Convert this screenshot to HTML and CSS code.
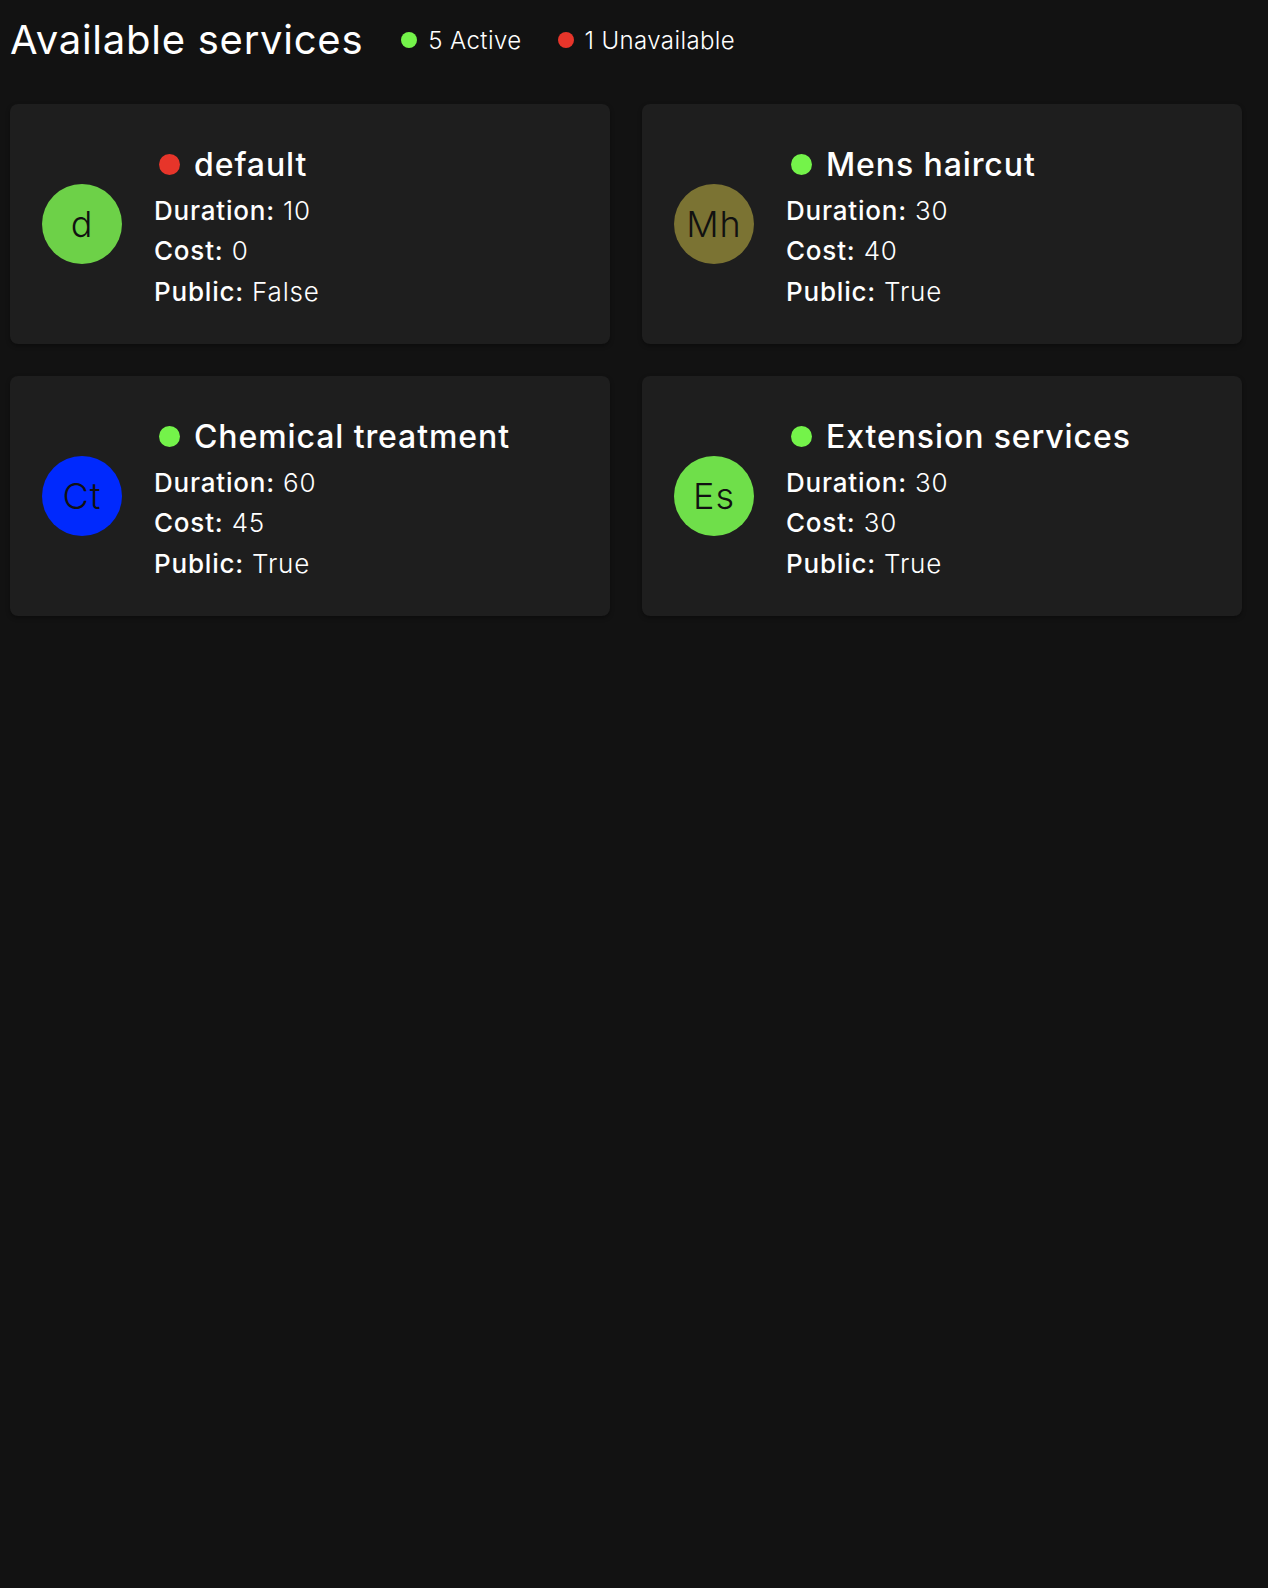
FILE: index.html
```html
<!DOCTYPE html>
<html lang="en">
<head>
<meta charset="utf-8">
<title>Available services</title>
<link rel="stylesheet" href="styles.css">
</head>
<body>
<div class="page">
  <header class="header">
    <h1 class="title">Available services</h1>
    <div class="legend">
      <span class="legend-item"><span class="dot dot-sm dot-green"></span>5 Active</span>
      <span class="legend-item"><span class="dot dot-sm dot-red"></span>1 Unavailable</span>
    </div>
  </header>
  <main class="grid">
    <article class="card">
      <div class="avatar av-green">d</div>
      <div class="info">
        <div class="name"><span class="dot dot-lg dot-red"></span>default</div>
        <div class="row"><b>Duration:</b> 10</div>
        <div class="row"><b>Cost:</b> 0</div>
        <div class="row"><b>Public:</b> False</div>
      </div>
    </article>
    <article class="card">
      <div class="avatar av-olive">Mh</div>
      <div class="info">
        <div class="name"><span class="dot dot-lg dot-green"></span>Mens haircut</div>
        <div class="row"><b>Duration:</b> 30</div>
        <div class="row"><b>Cost:</b> 40</div>
        <div class="row"><b>Public:</b> True</div>
      </div>
    </article>
    <article class="card">
      <div class="avatar av-blue">Ct</div>
      <div class="info">
        <div class="name"><span class="dot dot-lg dot-green"></span>Chemical treatment</div>
        <div class="row"><b>Duration:</b> 60</div>
        <div class="row"><b>Cost:</b> 45</div>
        <div class="row"><b>Public:</b> True</div>
      </div>
    </article>
    <article class="card">
      <div class="avatar av-lime">Es</div>
      <div class="info">
        <div class="name"><span class="dot dot-lg dot-green"></span>Extension services</div>
        <div class="row"><b>Duration:</b> 30</div>
        <div class="row"><b>Cost:</b> 30</div>
        <div class="row"><b>Public:</b> True</div>
      </div>
    </article>
  </main>
</div>
</body>
</html>
```
FILE: styles.css
```css
html, body {
  margin: 0;
  padding: 0;
  background: #121212;
}
body {
  font-family: Inter, "Open Sans", "Liberation Sans", sans-serif;
  color: #ffffff;
  min-height: 1588px;
}
.page {
  padding: 10px 26px 0 10px;
}
.header {
  display: flex;
  align-items: center;
  gap: 38px;
  height: 60px;
}
.title {
  margin: 0;
  font-size: 40px;
  font-weight: 400;
  letter-spacing: 0.75px;
  line-height: 60px;
}
.legend {
  display: flex;
  align-items: center;
  gap: 36px;
  font-size: 24px;
  font-weight: 300;
  letter-spacing: 0.4px;
}
.legend-item {
  display: flex;
  align-items: center;
  gap: 11px;
}
.dot {
  display: inline-block;
  border-radius: 50%;
  flex: none;
}
.dot-sm { width: 16px; height: 16px; }
.dot-lg { width: 21px; height: 21px; }
.dot-green { background: #74f34a; }
.dot-red { background: #e7352a; }
.grid {
  margin-top: 34px;
  display: grid;
  grid-template-columns: 600px 600px;
  column-gap: 32px;
  row-gap: 32px;
}
.card {
  background: #1e1e1e;
  border-radius: 8px;
  box-shadow: 0 2px 4px rgba(0, 0, 0, 0.35);
  height: 240px;
  box-sizing: border-box;
  padding: 0 32px;
  display: flex;
  align-items: center;
  gap: 32px;
}
.avatar {
  width: 80px;
  height: 80px;
  border-radius: 50%;
  flex: none;
  display: flex;
  align-items: center;
  justify-content: center;
  color: #111111;
  font-size: 36px;
  font-weight: 300;
  letter-spacing: 1px;
}
.av-green { background: #6dd148; }
.av-olive { background: #7b7333; }
.av-blue { background: #0029fd; }
.av-lime { background: #6fdf4a; }
.info {
  display: flex;
  flex-direction: column;
  margin-top: 6px;
}
.name {
  display: flex;
  align-items: center;
  gap: 14px;
  font-size: 32px;
  font-weight: 500;
  letter-spacing: 0.9px;
  line-height: 46px;
  padding-left: 5px;
  margin-bottom: 3px;
}
.row {
  font-size: 26px;
  font-weight: 300;
  letter-spacing: 0.8px;
  line-height: 40.5px;
}
.row b {
  font-weight: 500;
}
```
